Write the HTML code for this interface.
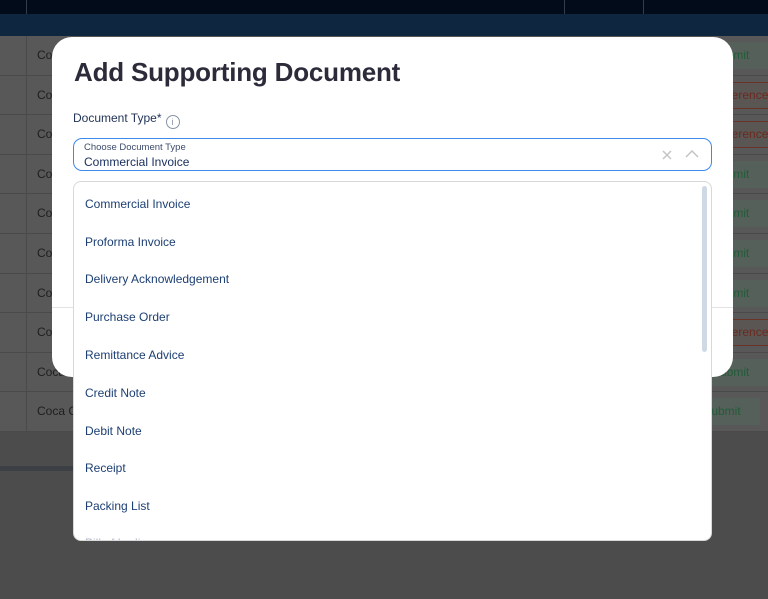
<!DOCTYPE html>
<html><head><meta charset="utf-8"><style>
*{margin:0;padding:0;box-sizing:border-box}
body{width:768px;height:599px;overflow:hidden;position:relative;background:#4c4c4c;font-family:"Liberation Sans",sans-serif}
.top{position:absolute;left:0;top:0;width:768px;height:14px;background:#020b1a}
.vl{position:absolute;top:0;height:14px;width:1px;background:#333c4a}
.band{position:absolute;left:0;top:14px;width:768px;height:22px;background:#0f2641}
.tbl{position:absolute;left:0;top:36px;width:768px;height:396px;background:#585858}
.row{position:absolute;left:0;width:768px;height:39.6px;border-bottom:1px solid #4a4a4a;font-size:12px;color:#1e1e1e}
.row .c{position:absolute;left:37px;top:12px}
.row .s{position:absolute;left:712px;top:6px;width:60px;height:27px;background:#56605a;color:#215c38;padding:6px 0 0 0}
.row .r{position:absolute;left:712px;top:6px;width:60px;height:27px;border:1px solid #6b3328;color:#6b2a1e;padding:5px 0 0 0;background:#5a5654}
.colline{position:absolute;left:26px;top:36px;width:1px;height:396px;background:#4a4a4a}
.sb{position:absolute;left:0;top:466px;width:74px;height:5px;background:#3c3f44}
.modal{position:absolute;left:52px;top:37px;width:681px;height:340px;background:#fff;border-radius:20px}
h1{position:absolute;left:22px;top:20px;font-size:26px;font-weight:bold;color:#2b2b3a;letter-spacing:-0.2px}
.lbl{position:absolute;left:21px;top:74px;font-size:12px;color:#23355a}
.info{display:inline-block;width:14px;height:14px;border:1.3px solid #8892a3;border-radius:50%;font-size:9px;color:#8892a3;text-align:center;line-height:12px;vertical-align:-3px;margin-left:4px}
.sel{position:absolute;left:21px;top:101px;width:639px;height:33px;border:1.3px solid #3d8ae8;border-radius:9px}
.sel .ph{position:absolute;left:10px;top:3px;font-size:9.5px;color:#3c4c6c}
.sel .v{position:absolute;left:10px;top:16px;font-size:12px;color:#1c3160}
.div{position:absolute;left:0;top:270px;width:681px;height:1px;background:#e3e3e3}
.dd{position:absolute;left:73px;top:181px;width:639px;height:360px;background:#fff;border:1px solid #d8d8d8;border-radius:8px;overflow:hidden}
.it{position:absolute;left:11px;font-size:12px;color:#1c3f73}
.scr{position:absolute;left:628px;top:4px;width:5px;height:166px;background:#cfd9e4;border-radius:3px}
</style></head><body>
<div class="top"></div><div class="vl" style="left:26px"></div><div class="vl" style="left:564px"></div><div class="vl" style="left:643px"></div>
<div class="band"></div>
<div class="tbl"></div>
<div class="row" style="top:36px"><span class="c">Co</span><span class="s">Submit</span></div>
<div class="row" style="top:75.6px"><span class="c">Co</span><span class="r">Reference</span></div>
<div class="row" style="top:115.2px"><span class="c">Co</span><span class="r">Reference</span></div>
<div class="row" style="top:154.8px"><span class="c">Co</span><span class="s">Submit</span></div>
<div class="row" style="top:194.4px"><span class="c">Co</span><span class="s">Submit</span></div>
<div class="row" style="top:234px"><span class="c">Co</span><span class="s">Submit</span></div>
<div class="row" style="top:273.6px"><span class="c">Co</span><span class="s">Submit</span></div>
<div class="row" style="top:313.2px"><span class="c">Co</span><span class="r">Reference</span></div>
<div class="row" style="top:352.8px"><span class="c">Coca</span><span class="s">Submit</span></div>
<div class="row" style="top:392.4px"><span class="c">Coca Cola</span><span class="s" style="left:700px">&nbsp;Submit</span></div>
<div class="colline"></div>
<div class="sb"></div>
<div class="modal">
<h1>Add Supporting Document</h1>
<div class="lbl">Document Type*<span class="info">i</span></div>
<div class="sel"><span class="ph">Choose Document Type</span><span class="v">Commercial Invoice</span>
<svg style="position:absolute;left:588px;top:11px" width="10" height="10"><path d="M1 1L9 9M9 1L1 9" stroke="#c4c4c4" stroke-width="1.5"/></svg>
<svg style="position:absolute;left:611px;top:11px" width="14" height="9"><path d="M1 7L7 1L13 7" stroke="#c4c4c4" stroke-width="1.5" fill="none"/></svg>
</div>
<div class="div"></div>
</div>
<div class="dd">
<div class="it" style="top:15px">Commercial Invoice</div>
<div class="it" style="top:53px">Proforma Invoice</div>
<div class="it" style="top:90px">Delivery Acknowledgement</div>
<div class="it" style="top:128px">Purchase Order</div>
<div class="it" style="top:166px">Remittance Advice</div>
<div class="it" style="top:204px">Credit Note</div>
<div class="it" style="top:242px">Debit Note</div>
<div class="it" style="top:279px">Receipt</div>
<div class="it" style="top:317px">Packing List</div>
<div class="it" style="top:354px;color:#b0b8c8">Bill of Lading</div>
<div class="scr"></div>
</div>
</body></html>
